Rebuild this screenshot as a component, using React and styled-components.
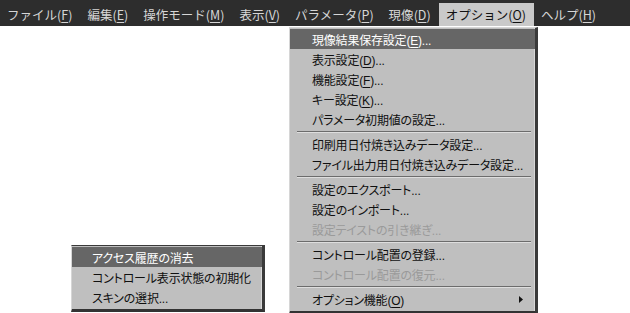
import styled, { createGlobalStyle } from 'styled-components'

const GlobalStyle = createGlobalStyle`
  html, body {
    margin: 0;
    padding: 0;
    background: #ffffff;
  }
  body {
    font-family: "Noto Sans CJK JP", "Noto Sans", sans-serif;
  }
`

const menuBar = [
  ['ファイル', 'F'],
  ['編集', 'E'],
  ['操作モード', 'M'],
  ['表示', 'V'],
  ['パラメータ', 'P'],
  ['現像', 'D'],
  ['オプション', 'O'],
  ['ヘルプ', 'H'],
]

const optionItems = [
  { label: '現像結果保存設定', key: 'E', dots: true, active: true },
  { label: '表示設定', key: 'D', dots: true },
  { label: '機能設定', key: 'F', dots: true },
  { label: 'キー設定', key: 'K', dots: true },
  { label: 'パラメータ初期値の設定', dots: true },
  { sep: true },
  { label: '印刷用日付焼き込みデータ設定', dots: true },
  { label: 'ファイル出力用日付焼き込みデータ設定', dots: true },
  { sep: true },
  { label: '設定のエクスポート', dots: true },
  { label: '設定のインポート', dots: true },
  { label: '設定テイストの引き継ぎ', dots: true, disabled: true },
  { sep: true },
  { label: 'コントロール配置の登録', dots: true },
  { label: 'コントロール配置の復元', dots: true, disabled: true },
  { sep: true },
  { label: 'オプション機能', key: 'O', sub: true },
]

const subItems = [
  { label: 'アクセス履歴の消去', active: true },
  { label: 'コントロール表示状態の初期化' },
  { label: 'スキンの選択', dots: true },
]

const Screen = styled.div`
  position: relative;
  width: 630px;
  height: 313px;
  overflow: hidden;
  background: #ffffff;
`

const Bar = styled.div`
  display: flex;
  align-items: flex-end;
  height: 26px;
  background: #2d2d2d;
`

const BarItem = styled.div`
  display: flex;
  align-items: center;
  height: 23px;
  padding: 0 8px 0 7px;
  font-size: 12.5px;
  color: ${(p) => (p.$open ? '#111111' : '#d6d6d6')};
  background: ${(p) => (p.$open ? '#c9c9c9' : 'transparent')};
  white-space: nowrap;
`

const U = styled.span`
  text-decoration: underline;
  text-underline-offset: 2px;
`

const Menu = styled.div`
  position: absolute;
  left: ${(p) => p.$x}px;
  top: ${(p) => p.$y}px;
  width: ${(p) => p.$w}px;
  box-sizing: border-box;
  display: flex;
  flex-direction: column;
  padding: 1px 0 2px;
  background: #bfbfbf;
  border-top: 1px solid ${(p) => (p.$darkTop ? '#3a3a3a' : '#d6d6d6')};
  border-left: 1px solid #d6d6d6;
  border-right: 3px solid #3a3a3a;
  border-bottom: 3px solid #333333;
  box-shadow: inset -1px 0 0 #d8d8d8;
  font-family: "Liberation Sans", "Noto Sans CJK JP", sans-serif;
  font-feature-settings: "palt";
`

const Item = styled.div`
  display: flex;
  align-items: center;
  justify-content: space-between;
  height: 20px;
  padding: 0 12px 0 ${(p) => p.$indent}px;
  font-size: 12px;
  letter-spacing: -0.2px;
  white-space: nowrap;
  color: ${(p) => (p.$active ? '#ffffff' : p.$disabled ? '#9a9a9a' : '#101010')};
  background: ${(p) => (p.$active ? '#666666' : 'transparent')};
`

const Separator = styled.div`
  height: 5px;
  display: flex;
  align-items: center;
  padding: 0 4px 0 7px;

  &::before {
    content: '';
    flex: 1;
    height: 1px;
    background: #6c6c6c;
    box-shadow: 0 1px 0 #dedede;
  }
`

const Arrow = () => (
  <svg width="4" height="7" viewBox="0 0 4 7">
    <polygon points="0,0 4,3.5 0,7" fill="#111111" />
  </svg>
)

const Label = ({ item }) => (
  <span>
    {item.label}
    {item.key && (
      <>
        (<U>{item.key}</U>)
      </>
    )}
    {item.dots && '...'}
  </span>
)

const App = () => (
  <>
    <GlobalStyle />
    <Screen>
      <Bar>
        {menuBar.map(([name, key]) => (
          <BarItem key={name} $open={key === 'O'}>
            {name}(<U>{key}</U>)
          </BarItem>
        ))}
      </Bar>

      <Menu $x={289} $y={27} $w={249}>
        {optionItems.map((item, i) =>
          item.sep ? (
            <Separator key={i} />
          ) : (
            <Item key={i} $indent={22} $active={item.active} $disabled={item.disabled}>
              <Label item={item} />
              {item.sub && <Arrow />}
            </Item>
          )
        )}
      </Menu>

      <Menu $x={71} $y={245} $w={194} $darkTop>
        {subItems.map((item, i) => (
          <Item key={i} $indent={20} $active={item.active}>
            <Label item={item} />
          </Item>
        ))}
      </Menu>
    </Screen>
  </>
)

export default App
